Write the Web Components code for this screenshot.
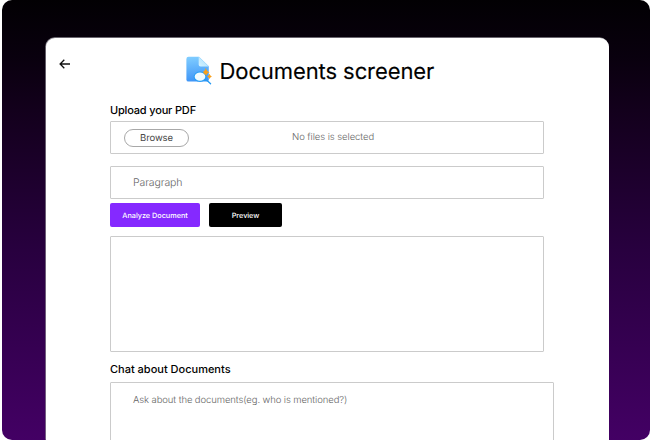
<!DOCTYPE html>
<html lang="en"><head><meta charset="utf-8"><title>Documents screener</title>
<style>
html,body{margin:0;height:100%;background:#fff;overflow:hidden}
body{font-family:Inter,"Liberation Sans",sans-serif;color:#000;text-rendering:geometricPrecision}
</style></head><body>
<screener-page></screener-page>
<script>
const define=(name,html)=>customElements.define(name,class extends HTMLElement{
  constructor(){super();this.attachShadow({mode:'open'}).innerHTML=html;}
});
define('back-arrow',`<style>:host{display:block;width:12px;height:10px}svg{display:block}</style>
<svg width="12" height="10" viewBox="0 0 12 10" fill="none" stroke="#111" stroke-width="1.3"><path d="M11 5H1.2M5.3 .7 1.1 5l4.2 4.3"/></svg>`);
define('document-logo',`<style>:host{display:block;width:26px;height:29px;margin-bottom:2px}svg{display:block}</style>
<svg width="26" height="29" viewBox="0 0 26 29">
<defs><linearGradient id="g" x1=".4" y1="0" x2=".5" y2="1"><stop stop-color="#7fccff"/><stop offset="1" stop-color="#3c93f7"/></linearGradient>
<linearGradient id="f" x1="0" y1="1" x2="1" y2="0"><stop stop-color="#d6f3ff"/><stop offset="1" stop-color="#a5defd"/></linearGradient></defs>
<path d="M2.5.8H13l9.800 9.400v13.200q0 2.200-2.200 2.200H2.500Q.4 25.600.4 23.400V2.900Q.4.8 2.500.8Z" fill="url(#g)"/>
<path d="M12.700.8l10.100 9.800h-8.300q-1.800 0-1.800-1.800Z" fill="url(#f)"/>
<path d="M19.800 11.700q.8 3.900 3.900 4.500q-3.100.8-3.900 4.500q-.8-3.700-3.900-4.500q3.100-.6 3.900-4.500ZM23.500 17.700q.6 2.300 2.400 2.700q-1.800.6-2.400 2.700q-.6-2.100-2.400-2.700q1.800-.4 2.400-2.700Z" fill="#f9a01b"/>
<ellipse cx="14" cy="20.700" rx="5.900" ry="4.700" fill="#eefaff" stroke="#279df5" stroke-width="1.100"/>
<path d="M18.800 24q2 .1 3.100 1.200l2.700 2.500" fill="none" stroke="#269af2" stroke-width="1.300" stroke-linecap="round"/>
<path d="M17.200 15.800q2.300.4 2.800 3.500q-1.900-.5-2.800-3.500Z" fill="#f9a01b"/></svg>`);
define('page-title',`<style>:host{display:flex;align-items:center;gap:7.500px;height:30px}
span{font-size:22px;line-height:30px;letter-spacing:-.09px;padding-top:2px;white-space:nowrap;-webkit-text-stroke:.15px #000}</style><document-logo></document-logo><span><slot></slot></span>`);
define('section-label',`<style>:host{display:block;font-size:11px;font-weight:500;line-height:14px;white-space:nowrap}</style><slot></slot>`);
define('outline-box',`<style>:host{display:flex;box-sizing:border-box;width:434px;border:1px solid #cbcbcb;border-radius:1px;align-items:center;font-size:9.500px;letter-spacing:-.1px;color:#666;font-weight:350;white-space:nowrap}</style><slot></slot>`);
define('pill-button',`<style>:host{display:flex;box-sizing:border-box;width:65px;height:18px;padding-top:1px;border:1px solid #a8a8a8;border-radius:9px;align-items:center;justify-content:center;font-size:9.500px;letter-spacing:-.1px;color:#484848;font-weight:400}</style><slot></slot>`);
define('action-button',`<style>:host{display:flex;box-sizing:border-box;height:24px;border-radius:2px;align-items:center;justify-content:center;color:#fff;font-size:7.300px;letter-spacing:-.03px;font-weight:450;white-space:nowrap;background:var(--fill)}</style><slot></slot>`);
define('screener-page',`<style>
:host{display:block;box-sizing:border-box;width:650px;height:440px;padding-left:2px}
.frame{box-sizing:border-box;height:440px;padding:38px 41px 0 44px;border-radius:10px;overflow:hidden;background:linear-gradient(#020003 0,#09000e 13%,#13001c 25%,#28003f 57%,#430064 100%)}
.card{box-sizing:border-box;height:402px;background:#fff;border-radius:9px 9px 0 0;padding:18px 0 0 12.500px;box-shadow:-.5px -.5px 0 .2px #8b8790}
header{display:flex;height:30px}
back-arrow{margin-top:3px}
page-title{margin-left:115.500px}
main{padding-left:51.500px}
.l1{margin-top:16.500px;letter-spacing:-.17px}
.upload{height:33px;margin-top:4.500px;padding-left:13px}
.status{margin-left:103px;letter-spacing:-.07px}
.paragraph{height:33px;margin-top:12px;padding:0 0 0 22px;font-size:10.500px}
.buttons{display:flex;gap:9px;margin-top:4px}
.result{height:116px;margin-top:9px}
.l2{margin-top:10px}
.chat{width:444px;height:90px;margin-top:6px;padding:11.500px 22px;align-items:flex-start}
</style>
<div class="frame"><div class="card">
<header><back-arrow></back-arrow><page-title>Documents screener</page-title></header>
<main><section-label class="l1">Upload your PDF</section-label>
<outline-box class="upload"><pill-button>Browse</pill-button><span class="status">No files is selected</span></outline-box>
<outline-box class="paragraph">Paragraph</outline-box>
<div class="buttons"><action-button style="width:90px;--fill:#8529ff">Analyze Document</action-button><action-button style="width:73px;--fill:#000">Preview</action-button></div>
<outline-box class="result"></outline-box>
<section-label class="l2">Chat about Documents</section-label>
<outline-box class="chat">Ask about the documents(eg. who is mentioned?)</outline-box></main>
</div></div>`);
</script></body></html>
